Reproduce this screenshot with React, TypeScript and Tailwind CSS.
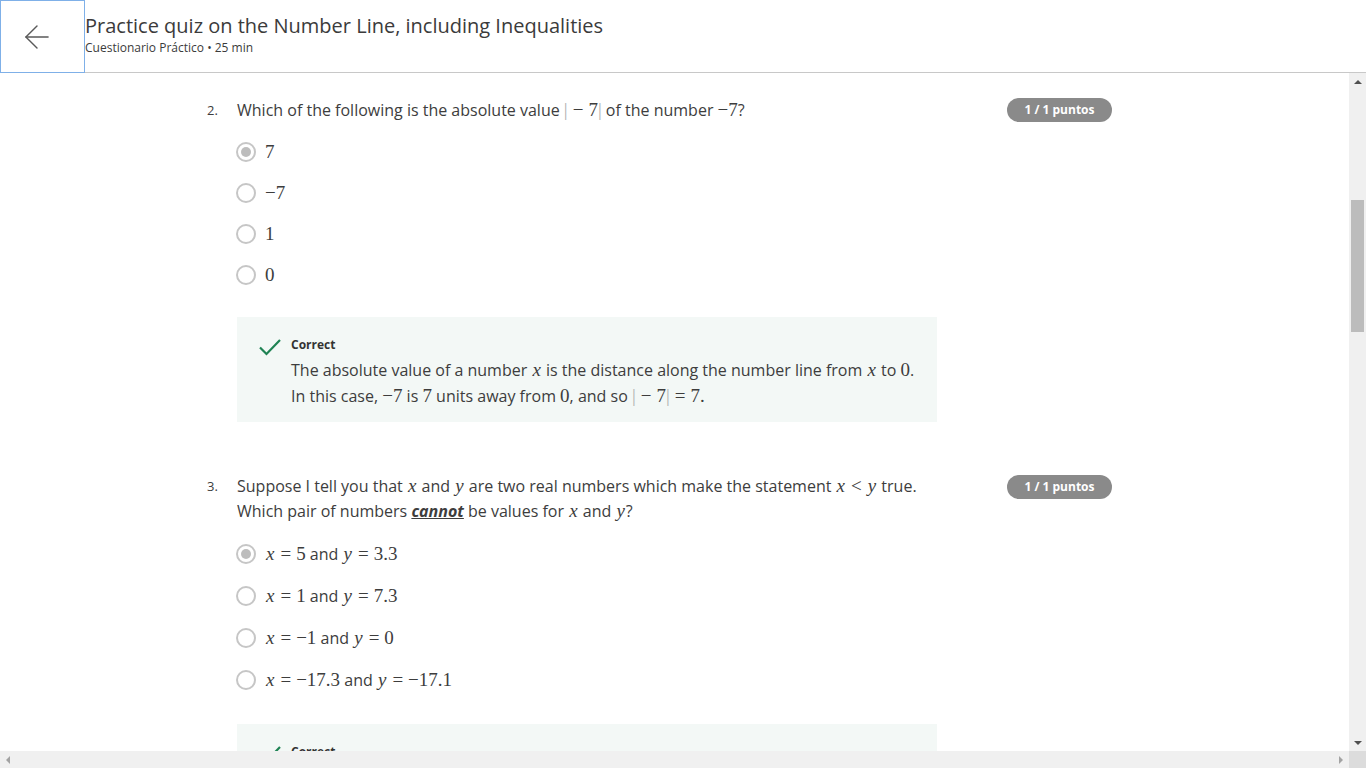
import { ArrowLeft } from "lucide-react"
import type { ReactNode } from "react"

const serif = "font-['Liberation_Serif','DejaVu_Serif',serif] text-[19px] leading-none"

function V({ children }: { children: ReactNode }) {
  return <span className={`${serif} px-[1px] italic`}>{children}</span>
}

function N({ children }: { children: ReactNode }) {
  return <span className={serif}>{children}</span>
}

function Op({ children }: { children: ReactNode }) {
  return <span className={`${serif} mx-[5px]`}>{children}</span>
}

function Abs({ children }: { children: ReactNode }) {
  return (
    <span className={serif}>
      <span className="text-[#b0b0b0]">|</span>
      {children}
      <span className="text-[#b0b0b0]">|</span>
    </span>
  )
}

function Badge() {
  return (
    <div className="ml-[70px] mt-[1px] flex h-6 w-[105px] shrink-0 items-center justify-center rounded-full bg-[#8a8a8a] text-[12px] font-bold text-white">
      1 / 1 puntos
    </div>
  )
}

function Radio({ selected, children, h }: { selected?: boolean; children: ReactNode; h: string }) {
  return (
    <div className={`flex items-center gap-[9px] ${h}`}>
      <span className="flex h-5 w-5 items-center justify-center rounded-full border-2 border-[#c6c6c6]">
        {selected && <span className="h-[10px] w-[10px] rounded-full bg-[#bdbdbd]" />}
      </span>
      <span className="text-[16px] text-[#3d3d3d]">{children}</span>
    </div>
  )
}

function Check() {
  return (
    <svg width="24" height="18" viewBox="0 0 24 18" className="mt-[1px] shrink-0">
      <path d="M2 9.5 L8.5 16 L22 2" fill="none" stroke="#1f8354" strokeWidth="2.2" />
    </svg>
  )
}

function Feedback({ children }: { children: ReactNode }) {
  return (
    <div className="flex w-[700px] gap-[9px] bg-[#f3f8f6] pb-[13px] pl-[21px] pt-[20px]">
      <Check />
      <div>
        <div className="text-[12px] font-bold leading-4 text-[#333]">Correct</div>
        <div className="mt-[4px] text-[16px] leading-[26px] text-[#3d3d3d]">{children}</div>
      </div>
    </div>
  )
}

export default function App() {
  return (
    <div className="flex h-screen w-full flex-col overflow-hidden bg-white font-['Open_Sans','Liberation_Sans',sans-serif] text-[#3d3d3d]">
      <header className="flex h-[73px] shrink-0">
        <button className="flex h-[73px] w-[85px] shrink-0 items-center border border-[#7fb0e8] pl-[17px] text-[#5a5a5a]">
          <ArrowLeft size={38} strokeWidth={0.9} />
        </button>
        <div className="flex-1 border-b border-[#c8c8c8] pt-[12px]">
          <h1 className="text-[20px] leading-7 text-[#3b3b3b]">Practice quiz on the Number Line, including Inequalities</h1>
          <p className="text-[12px] leading-4 text-[#3b3b3b]">Cuestionario Práctico • 25 min</p>
        </div>
      </header>

      <div className="flex min-h-0 flex-1">
        <main className="min-w-0 flex-1 overflow-hidden pl-[207px] pt-[24px]">
          <section>
            <div className="flex items-start">
              <span className="w-[30px] shrink-0 text-[13px] leading-[26px]">2.</span>
              <p className="w-[700px] text-[16px] leading-[26px]">
                Which of the following is the absolute value <Abs><Op>−</Op>7</Abs> of the number <N>−7</N>?
              </p>
              <Badge />
            </div>
            <div className="ml-[29px] mt-[8px]">
              <Radio selected h="h-[41px]"><N>7</N></Radio>
              <Radio h="h-[41px]"><N>−7</N></Radio>
              <Radio h="h-[41px]"><N>1</N></Radio>
              <Radio h="h-[41px]"><N>0</N></Radio>
            </div>
            <div className="ml-[30px] mt-[22px]">
              <Feedback>
                The absolute value of a number <V>x</V> is the distance along the number line from <V>x</V> to <N>0</N>.
                <br />
                In this case, <N>−7</N> is <N>7</N> units away from <N>0</N>, and so <Abs><Op>−</Op>7</Abs><Op>=</Op><N>7.</N>
              </Feedback>
            </div>
          </section>

          <section className="mt-[52px]">
            <div className="flex items-start">
              <span className="w-[30px] shrink-0 text-[13px] leading-[25px]">3.</span>
              <p className="w-[700px] text-[16px] leading-[25px]">
                Suppose I tell you that <V>x</V> and <V>y</V> are two real numbers which make the statement <V>x</V><Op>&lt;</Op><V>y</V> true.
                <br />
                Which pair of numbers <strong className="italic underline">cannot</strong> be values for <V>x</V> and <V>y</V>?
              </p>
              <Badge />
            </div>
            <div className="ml-[29px] mt-[9px]">
              <Radio selected h="h-[42px]"><V>x</V><Op>=</Op><N>5</N> and <V>y</V><Op>=</Op><N>3.3</N></Radio>
              <Radio h="h-[42px]"><V>x</V><Op>=</Op><N>1</N> and <V>y</V><Op>=</Op><N>7.3</N></Radio>
              <Radio h="h-[42px]"><V>x</V><Op>=</Op><N>−1</N> and <V>y</V><Op>=</Op><N>0</N></Radio>
              <Radio h="h-[42px]"><V>x</V><Op>=</Op><N>−17.3</N> and <V>y</V><Op>=</Op><N>−17.1</N></Radio>
            </div>
            <div className="ml-[30px] mt-[23px]">
              <Feedback>
                Since <N>5</N> is greater than <N>3.3</N>, this pair cannot satisfy <V>x</V><Op>&lt;</Op><V>y</V>.
              </Feedback>
            </div>
          </section>
        </main>

        <aside className="flex w-[17px] shrink-0 flex-col items-center bg-[#f0f0f0]">
          <div className="flex h-[17px] items-center justify-center">
            <span className="h-0 w-0 border-x-[4px] border-b-[4px] border-x-transparent border-b-[#505050]" />
          </div>
          <div className="mt-[110px] h-[132px] w-[13px] bg-[#bcbcbc]" />
          <div className="flex-1" />
          <div className="flex h-[17px] items-center justify-center">
            <span className="h-0 w-0 border-x-[4px] border-t-[4px] border-x-transparent border-t-[#505050]" />
          </div>
        </aside>
      </div>

      <footer className="flex h-[17px] shrink-0">
        <div className="flex flex-1 items-center justify-between bg-[#f0f0f0] px-[6px]">
          <span className="h-0 w-0 border-y-[4px] border-r-[4px] border-y-transparent border-r-[#a3a3a3]" />
          <span className="h-0 w-0 border-y-[4px] border-l-[4px] border-y-transparent border-l-[#a3a3a3]" />
        </div>
        <div className="w-[17px] bg-[#dcdcdc]" />
      </footer>
    </div>
  )
}
